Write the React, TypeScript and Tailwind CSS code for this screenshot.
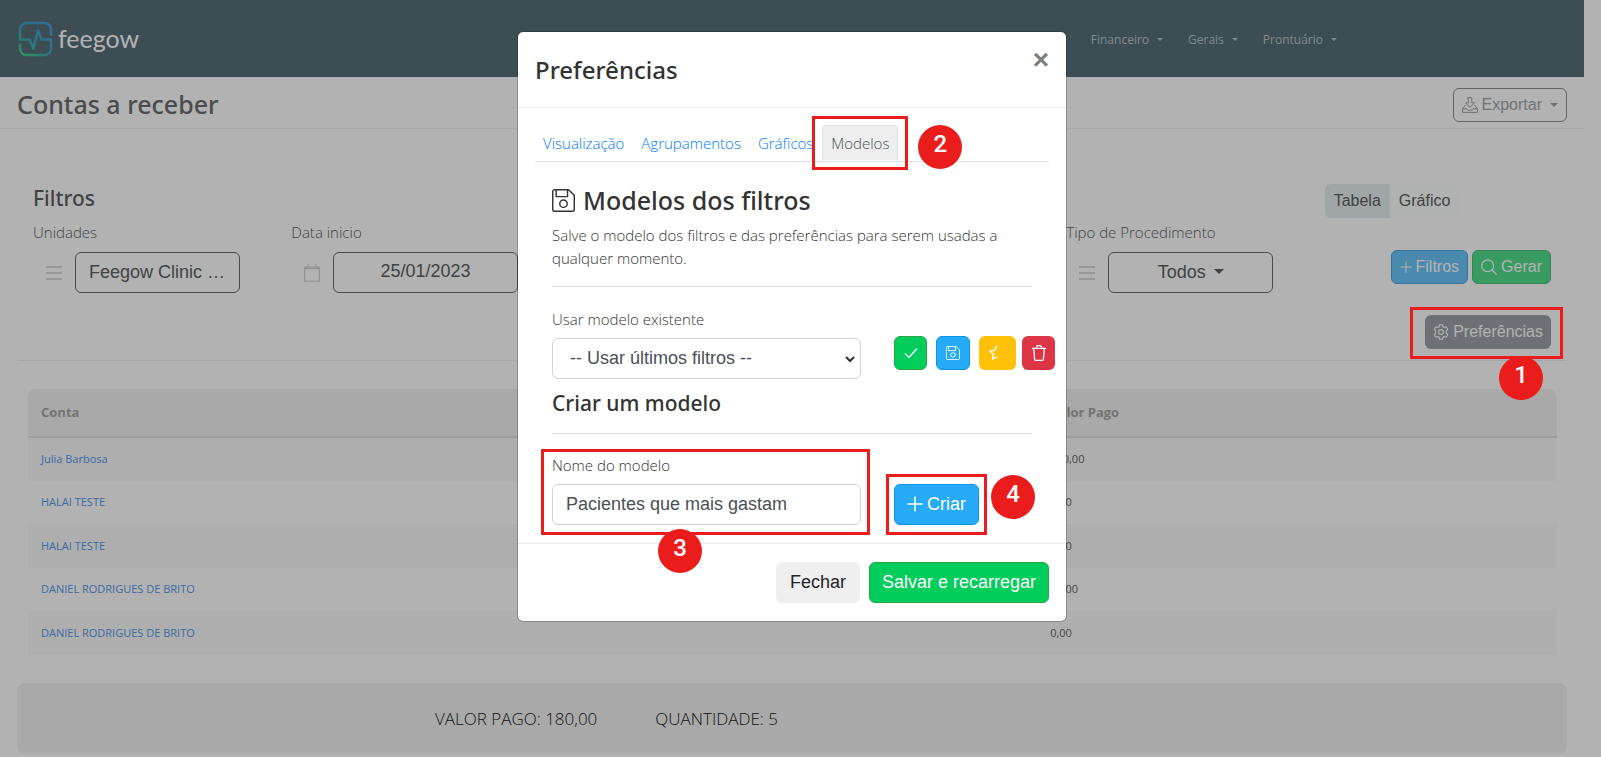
import type { ReactNode } from 'react';

const tableRows = [
  { conta: 'Julia Barbosa', valor: '150,00' },
  { conta: 'HALAI TESTE', valor: '0,00' },
  { conta: 'HALAI TESTE', valor: '0,00' },
  { conta: 'DANIEL RODRIGUES DE BRITO', valor: '30,00' },
  { conta: 'DANIEL RODRIGUES DE BRITO', valor: '0,00' },
];

type IconProps = { className?: string };

const Svg = ({ className = '', children }: IconProps & { children: ReactNode }) => (
  <svg
    className={`shrink-0 ${className}`}
    viewBox="0 0 16 16"
    fill="none"
    stroke="currentColor"
    strokeLinecap="round"
    strokeLinejoin="round"
    aria-hidden="true"
  >
    {children}
  </svg>
);

const SaveIcon = ({ className }: IconProps) => (
  <Svg className={className}>
    <path d="M1.9.5h9.600L15.500 4.400V14a1.400 1.400 0 0 1-1.400 1.500H1.900A1.400 1.400 0 0 1 .5 14V1.900A1.400 1.400 0 0 1 1.900.5z" />
    <path d="M2.900.7v4.600h7.900V.7" />
    <circle cx="8" cy="10.200" r="2.600" />
  </Svg>
);

const PlusIcon = ({ className }: IconProps) => (
  <Svg className={className}>
    <path d="M8 1v14M1 8h14" strokeWidth="1.500" />
  </Svg>
);

const CheckIcon = ({ className }: IconProps) => (
  <Svg className={className}>
    <path d="M1.500 9l4 4.200 9-9.800" strokeWidth="1.500" />
  </Svg>
);

const StarHalfIcon = ({ className }: IconProps) => (
  <Svg className={className}>
    <path d="M7.700 1L5.600 5.300 1 6l3.400 3.300-.9 4.900L7.800 12" strokeWidth="1.400" />
  </Svg>
);

const TrashIcon = ({ className }: IconProps) => (
  <Svg className={className}>
    <path
      d="M1.500 3.300h13M2.700 3.500l.9 10.900c.1.6.5 1 1.100 1h6.600c.6 0 1-.4 1.100-1l.9-10.900M5 3.200l1-2.200c.1-.3.4-.5.7-.5h2.600c.3 0 .6.2.7.5l1 2.200"
      strokeWidth="1.300"
    />
  </Svg>
);

const SearchIcon = ({ className }: IconProps) => (
  <Svg className={className}>
    <circle cx="6.700" cy="6.700" r="5.900" strokeWidth="1.200" />
    <path d="M11 11l4.400 4.400" strokeWidth="1.200" />
  </Svg>
);

const GearIcon = ({ className }: IconProps) => (
  <Svg className={className}>
    <path
      d="M6.500.7h3l.4 2 1.400.8 2-.7 1.500 2.600-1.600 1.400v2.400l1.600 1.400-1.500 2.600-2-.7-1.400.8-.4 2h-3l-.4-2-1.400-.8-2 .7-1.500-2.600 1.600-1.400V6.800L1.200 5.400l1.500-2.600 2 .7 1.400-.8z"
      strokeWidth="1.100"
    />
    <circle cx="8" cy="8" r="2.400" strokeWidth="1.100" />
  </Svg>
);

const DownloadIcon = ({ className }: IconProps) => (
  <Svg className={className}>
    <path d="M6.200.6h3.600v5.200h2.700L8 10.400 3.500 5.800h2.700z" />
    <path d="M3.200 8.400L.6 11.800v3.600h14.800v-3.600l-2.600-3.400M.6 11.800h4.200l1.200 1.400h4l1.200-1.400h4.200" />
  </Svg>
);

const BarsIcon = ({ className }: IconProps) => (
  <Svg className={className}>
    <path d="M0 2h16M0 8h16M0 14h16" strokeWidth="2" strokeLinecap="butt" />
  </Svg>
);

const CalendarIcon = ({ className }: IconProps) => (
  <Svg className={className}>
    <path d="M1.500 2.800h13v12.500h-13zM1.500 4h13" />
    <path d="M4.500.3v2.500M11.500.3v2.500" />
  </Svg>
);

const Logo = () => (
  <a href="#" className="flex items-center gap-1 text-white" aria-label="feegow">
    <svg width="36" height="36" viewBox="0 0 36 36" fill="none" aria-hidden="true">
      <defs>
        <linearGradient id="logo" x1="4" y1="34" x2="28" y2="2" gradientUnits="userSpaceOnUse">
          <stop offset="0" stopColor="#49cf83" />
          <stop offset="0.45" stopColor="#3fa7b8" />
          <stop offset="1" stopColor="#4a9fe0" />
        </linearGradient>
      </defs>
      <path
        d="M33 15V8.500A6.500 6.500 0 0 0 26.500 2h-18A6.500 6.500 0 0 0 2 8.500V18.500h9.500l3.800 9L20 9.500l3.500 9H33v9a6.500 6.500 0 0 1-6.500 6.500h-18A6.500 6.500 0 0 1 2 27.500v-5"
        stroke="url(#logo)"
        strokeWidth="2.500"
        strokeLinejoin="round"
      />
    </svg>
    <span className="font-['Lato',sans-serif] text-[25px] leading-none">feegow</span>
  </a>
);

const Marker = ({ n, className }: { n: number; className: string }) => (
  <span
    className={`pointer-events-none absolute z-30 flex size-11 items-start justify-center rounded-full bg-[#eb1c1c] pt-[3px] font-['Roboto',sans-serif] text-2xl font-medium text-white ${className}`}
  >
    {n}
  </span>
);

const Highlight = ({ className }: { className: string }) => (
  <span className={`pointer-events-none absolute z-30 border-3 border-[#eb1c1c] ${className}`} />
);

const Navbar = () => (
  <header className="flex h-[77px] items-center justify-between bg-[#566f79] px-[18px]">
    <Logo />
    <nav className="mr-[229px] flex gap-[25px] pt-0.5 text-[12px] text-white/60">
      {['Financeiro', 'Gerais', 'Prontuário'].map((item) => (
        <a key={item} href="#" className="flex items-center gap-2">
          {item}
          <span className="border-x-3 border-t-3 border-x-transparent border-t-current" />
        </a>
      ))}
    </nav>
  </header>
);

const Filters = () => (
  <section className="mx-[17px] border-b border-[#ececec] pt-[55px] text-[#5c5f62]">
    <div className="grid h-[176px] grid-cols-6">
      <div className="col-span-5">
        <h2 className="px-4 font-['Noto_Sans',sans-serif] text-[21px] leading-7 font-medium">Filtros</h2>
        <div className="mt-2 grid grid-cols-5">
          <div className="px-4">
            <label htmlFor="unidades" className="block text-[15px] leading-6 font-light">Unidades</label>
            <div className="mt-2 flex items-center">
              <BarsIcon className="mx-[13px] size-4 text-[#d8d8d8]" />
              <button id="unidades" className="h-[41px] w-[165px] rounded-md border border-[#6a6d70] pb-0.5 text-left indent-[13px] font-['Liberation_Sans',sans-serif] text-lg leading-6">
                Feegow Clinic …
              </button>
            </div>
          </div>
          <div className="px-4">
            <label htmlFor="data" className="block text-[15px] leading-6 font-light">Data inicio</label>
            <div className="mt-2 flex items-center">
              <CalendarIcon className="mx-3 size-[18px] text-[#d0d0d0]" />
              <input
                id="data"
                defaultValue="25/01/2023"
                className="h-[41px] w-full min-w-0 rounded-md border border-[#6a6d70] pb-0.5 text-center font-['Liberation_Sans',sans-serif] text-lg"
              />
            </div>
          </div>
          <div className="col-start-5 px-4">
            <label htmlFor="tipo" className="block text-[15px] leading-6 font-light whitespace-nowrap">Tipo de Procedimento</label>
            <div className="mt-2 flex items-center">
              <BarsIcon className="mx-[13px] size-4 text-[#d8d8d8]" />
              <button id="tipo" className="flex h-[41px] w-[165px] items-center justify-center gap-2 rounded-md border border-[#6a6d70] pb-0.5 font-['Liberation_Sans',sans-serif] text-lg leading-6">
                Todos
                <span className="border-x-5 border-t-5 border-x-transparent border-t-current" />
              </button>
            </div>
          </div>
        </div>
      </div>
      <div className="px-4 font-['Liberation_Sans',sans-serif] text-base">
        <div className="flex h-[34px]">
          <button className="rounded-l-md bg-[#e6ecf1] px-[9px]">Tabela</button>
          <button className="rounded-r-md bg-[#fdfffe] px-[9px]">Gráfico</button>
        </div>
        <div className="mt-8 flex justify-end gap-1 text-white">
          <button className="flex h-[34px] items-center gap-1 rounded-md border border-[#4aa6e0] bg-[#6ac6fa] px-2">
            <PlusIcon className="size-3" />
            Filtros
          </button>
          <button className="flex h-[34px] items-center gap-1 rounded-md border border-[#4dc080] bg-[#52de8c] px-2">
            <SearchIcon className="size-4" />
            Gerar
          </button>
        </div>
        <div className="relative mt-[31px] ml-auto w-fit">
          <button className="flex h-[34px] items-center gap-1 rounded-md bg-[#9ca3a8] px-2 text-white">
            <GearIcon className="size-4" />
            Preferências
          </button>
          <Highlight className="-top-2 -right-3 -bottom-2.5 -left-[15px]" />
          <Marker n={1} className="top-[41px] right-2" />
        </div>
      </div>
    </div>
  </section>
);

const Report = () => (
  <section className="pt-7 pr-[27px] pl-7">
    <div className="overflow-hidden rounded-t-lg">
      <table className="w-full table-fixed text-left">
        <thead>
          <tr className="h-12 border-b-2 border-[#e1e1e1] bg-[#f3f3f3] text-[13px] text-[#a5a5a5]">
            <th className="w-[33%] px-[13px] font-bold">Conta</th>
            <th className="w-[33%]" />
            <th className="px-[13px] font-bold">Valor Pago</th>
          </tr>
        </thead>
        <tbody className="text-[11px]">
          {tableRows.map((row, i) => (
            <tr key={i} className="odd:h-[44px] odd:bg-[#fafafa] even:h-[43px]">
              <td className="px-[13px]">
                <a href="#" className="text-[#5599ec]">{row.conta}</a>
              </td>
              <td />
              <td className="px-[13px] text-[#666]">{row.valor}</td>
            </tr>
          ))}
        </tbody>
      </table>
    </div>
  </section>
);

const PreferencesModal = () => (
  <div className="absolute inset-x-0 top-0 z-20 pt-[31px] pr-[17px]">
    <div role="dialog" aria-labelledby="modal-title" className="mx-auto w-[550px] rounded-md border border-black/20 bg-white bg-clip-padding text-[#333]">
      <div className="flex h-[76px] items-start justify-between border-b border-[#e9ecef] px-[17px]">
        <h2 id="modal-title" className="pt-5 font-['Noto_Sans',sans-serif] text-2xl leading-9 font-medium">Preferências</h2>
        <button aria-label="Fechar" className="pt-3 font-['Liberation_Sans',sans-serif] text-[28px] leading-8 font-bold text-[#7f7f7f]">×</button>
      </div>

      <div className="px-[17px] pt-[17px]">
        <nav className="flex gap-px border-b border-[#dee2e6] text-[15px] font-light text-[#007bff]">
          <a href="#" className="px-2 py-1.5 leading-6">Visualização</a>
          <a href="#" className="px-2 py-1.5 leading-6">Agrupamentos</a>
          <a href="#" className="px-2 py-1.5 leading-6">Gráficos</a>
          <div className="relative">
            <a href="#" className="block rounded-t border border-b-0 border-[#dee2e6] bg-[#eee] px-2 py-[5px] leading-6 text-[#495057]">Modelos</a>
            <Highlight className="-inset-x-2.5 -inset-y-[9px]" />
            <Marker n={2} className="top-0 left-24" />
          </div>
        </nav>

        <div className="px-[17px] pt-5">
          <h3 className="flex items-center gap-2 font-['Noto_Sans',sans-serif] text-[25px] leading-9 font-medium">
            <SaveIcon className="size-[23px]" />
            Modelos dos filtros
          </h3>
          <p className="mt-1.5 mb-4 text-[15px] leading-[23px] font-light">
            Salve o modelo dos filtros e das preferências para serem usadas a qualquer momento.
          </p>
          <hr className="border-[#dedfe1]" />
          <label htmlFor="modelo" className="mt-5 block text-[15px] leading-6 font-light">Usar modelo existente</label>
          <div className="mt-[7px] flex items-start">
            <div className="relative">
              <select id="modelo" className="h-[41px] w-[309px] appearance-none rounded-md border border-[#ced4da] px-[17px] pb-0.5 font-['Liberation_Sans',sans-serif] text-lg leading-6 text-[#495057]">
                <option>-- Usar últimos filtros --</option>
              </select>
              <svg className="pointer-events-none absolute top-4 right-1.5 size-2.5" viewBox="0 0 10 10" fill="none" stroke="#333" strokeWidth="2">
                <path d="M1 3l4 4 4-4" />
              </svg>
            </div>
            <div className="-mt-0.5 ml-[33px] flex text-white">
              <button aria-label="Aplicar" className="mr-[9px] flex h-[34px] w-[33px] items-center justify-center rounded-md border border-[#28a745] bg-[#00cd5b]">
                <CheckIcon className="size-3.5" />
              </button>
              <button aria-label="Salvar" className="mr-[9px] flex h-[34px] w-[34px] items-center justify-center rounded-md border border-[#0b95e8] bg-[#27aaf8]">
                <SaveIcon className="size-3.5" />
              </button>
              <button aria-label="Favoritar" className="mr-1.5 flex h-[34px] w-[37px] items-center rounded-md bg-[#ffc107] pl-2.5">
                <StarHalfIcon className="size-4" />
              </button>
              <button aria-label="Excluir" className="flex h-[34px] w-[33px] items-center justify-center rounded-md bg-[#dc3545]">
                <TrashIcon className="size-4" />
              </button>
            </div>
          </div>
          <h4 className="mt-2.5 mb-4 font-['Noto_Sans',sans-serif] text-[21px] leading-7 font-medium">Criar um modelo</h4>
          <hr className="border-[#dedfe1]" />
          <div className="flex items-end pt-[19px] pb-[18px]">
            <div className="relative w-[309px]">
              <label htmlFor="nome" className="mb-[7px] block text-[15px] leading-6 font-light">Nome do modelo</label>
              <input
                id="nome"
                defaultValue="Pacientes que mais gastam"
                className="h-[41px] w-full rounded-md border border-[#ced4da] px-[13px] font-['Liberation_Sans',sans-serif] text-lg text-[#495057]"
              />
              <Highlight className="-top-1 -right-[9px] -bottom-2.5 -left-[11px]" />
              <Marker n={3} className="-bottom-12 left-[106px]" />
            </div>
            <div className="relative ml-[33px]">
              <button className="flex h-[41px] items-center gap-1 rounded-md border border-[#0b95e8] bg-[#27aaf8] px-3 pb-0.5 font-['Liberation_Sans',sans-serif] text-lg text-white">
                <PlusIcon className="size-4" />
                Criar
              </button>
              <Highlight className="-inset-x-2 -inset-y-2.5" />
              <Marker n={4} className="-top-[9px] left-[97px]" />
            </div>
          </div>
        </div>
      </div>

      <div className="flex justify-end gap-[9px] border-t border-[#e9ecef] px-[17px] py-[18px] font-['Liberation_Sans',sans-serif] text-lg">
        <button className="h-[41px] rounded-md bg-[#efefef] px-3.5 pb-0.5 text-[#212529]">Fechar</button>
        <button className="h-[41px] rounded-md border border-[#28a745] bg-[#00cd5b] px-3 pb-0.5 text-white">Salvar e recarregar</button>
      </div>
    </div>
  </div>
);

export default function App() {
  return (
    <div className="relative min-h-screen overflow-hidden bg-white font-['Open_Sans',sans-serif]">
      <div className="pr-[17px]">
        <Navbar />
        <div className="flex h-[52px] items-center justify-between border-b border-[#ececec] px-[17px] pt-1">
          <h1 className="font-['Noto_Sans',sans-serif] text-[25px] font-medium text-[#6a6d70]">Contas a receber</h1>
          <button className="flex h-[34px] items-center gap-1 rounded-md border border-[#8b9197] px-2 font-['Liberation_Sans',sans-serif] text-base text-[#a0a5aa]">
            <DownloadIcon className="size-4" />
            Exportar
            <span className="ml-1 border-x-4 border-t-4 border-x-transparent border-t-current" />
          </button>
        </div>
        <Filters />
        <Report />
        <footer className="mx-[17px] mt-7 mb-0.5 flex h-[71px] items-center gap-[58px] rounded-lg bg-[#f3f3f3] pl-[418px] text-[17px] font-light text-[#222]">
          <span>VALOR PAGO: 180,00</span>
          <span>QUANTIDADE: 5</span>
        </footer>
      </div>
      <div className="absolute inset-0 z-10 bg-black/30" />
      <PreferencesModal />
    </div>
  );
}
